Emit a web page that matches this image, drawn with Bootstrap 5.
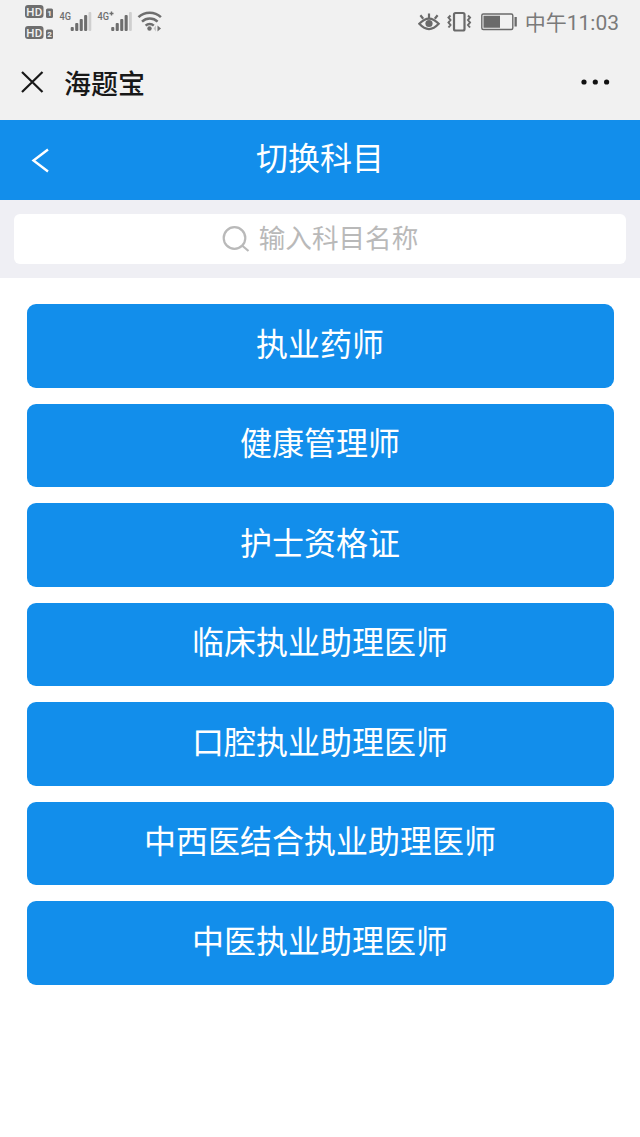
<!DOCTYPE html>
<html lang="zh-CN">
<head>
<meta charset="utf-8">
<meta name="viewport" content="width=device-width, initial-scale=1">
<title>切换科目</title>
<link href="https://cdn.jsdelivr.net/npm/bootstrap@5.3.0/dist/css/bootstrap.min.css" rel="stylesheet">
<style>
  body { font-family: "Noto Sans CJK SC", sans-serif; background: #fff; }
  svg { display: block; flex: none; }
  .status-bar { height: 44px; background: #f1f1f1; padding: 0 21px 0 24px; }
  .clock { font: 21px/44px Roboto, "Noto Sans CJK SC", sans-serif; color: #7a7a7a; margin-left: 7px; padding-top: 1px; white-space: nowrap; }
  .title-bar { height: 76px; background: #f1f1f1; padding: 0 30px 0 21px; }
  .app-name { font-size: 27px; line-height: 76px; font-weight: 500; color: #181818; margin-left: 20px; padding-top: 1px; }
  .page-head { height: 79.5px; background: #128eeb; color: #fff; }
  .page-head h1 { font-size: 32px; line-height: 72px; font-weight: 400; }
  .back-btn { left: 31px; top: 27px; }
  .search-area { height: 78px; background: #efeff4; padding: 14px; }
  .search-box { height: 50px; border-radius: 6px; color: #b9b9b9; font-size: 26.6px; line-height: 46px; }
  .subjects { padding: 26.8px 26.5px; gap: 16px; }
  .subjects .btn { --bs-btn-bg: #128eeb; --bs-btn-color: #fff; --bs-btn-hover-bg: #0f7fd3; --bs-btn-hover-color: #fff;
    height: 83.5px; border: 0; border-radius: 9px; font-size: 32px; line-height: 75px; padding: 0 0 8px; }
</style>
</head>
<body>
<header>
  <div class="status-bar d-flex align-items-center">
    <svg width="140" height="44" viewBox="24 0 140 44" fill="#6e6e6e" font-family="Roboto, sans-serif" font-weight="700">
      <rect x="25" y="5" width="18.500" height="13" rx="3"/>
      <rect x="25" y="26" width="18.500" height="13" rx="3"/>
      <g fill="#f1f1f1" font-size="11.500" font-weight="500">
        <text x="26.300" y="15.700" textLength="16">HD</text>
        <text x="26.300" y="36.700" textLength="16">HD</text>
      </g>
      <rect x="46" y="8.500" width="7" height="9.500" rx="1.500"/>
      <rect x="46" y="29.500" width="7" height="9.500" rx="1.500"/>
      <g fill="#f1f1f1" font-size="8">
        <text x="47.200" y="16.200">1</text>
        <text x="47.200" y="37.200">2</text>
      </g>
      <g font-size="11.500" font-weight="500">
        <text x="59.500" y="20" textLength="11.500" lengthAdjust="spacingAndGlyphs">4G</text>
        <text x="97.500" y="20" textLength="11.500" lengthAdjust="spacingAndGlyphs">4G</text>
      </g>
      <path d="M109.500 13.500h4M111.500 11.500v4" stroke="#6e6e6e" stroke-width="1.400"/>
      <g id="bars">
        <rect x="70.700" y="27" width="3.100" height="4" rx="1"/>
        <rect x="75.200" y="23" width="3.100" height="8" rx="1"/>
        <rect x="79.700" y="19" width="3.100" height="12" rx="1"/>
        <rect x="84.100" y="15" width="3.100" height="16" rx="1"/>
        <rect x="88.500" y="12" width="2.800" height="19" rx="1" fill="#cfcfcf"/>
      </g>
      <use href="#bars" x="40.500"/>
      <g fill="none" stroke="#6e6e6e" stroke-width="2.500">
        <path d="M138.500 17.200a16 16 0 0 1 22.400 0M142 21.600a11.500 11.500 0 0 1 15.600 0M145.600 25.600a6.300 6.300 0 0 1 8.200 0"/>
      </g>
      <circle cx="149.500" cy="28.500" r="2.200"/>
      <path d="M157.500 25.500l3.500 3-3.500 3z"/>
      <path d="M156 25.500l-2.500 3 2.500 3z" fill="#c6c6c6"/>
    </svg>
    <svg class="ms-auto" width="100" height="44" viewBox="418 0 100 44" fill="none" stroke="#6a6a6a" stroke-width="2.200">
      <path d="M419.300 23.800q9.700-10.500 19.400 0q-9.700 10.500-19.400 0z"/>
      <circle cx="429" cy="23.500" r="3.600" fill="#6a6a6a" stroke="none"/>
      <path d="M429 18v-4.500M423.200 18.800l-2.800-3.500M434.800 18.800l2.800-3.500"/>
      <rect x="454" y="13" width="10.500" height="17.500" rx="1.500"/>
      <path d="M450.500 15.500l-2 2 2 2.500-2 2.500 2 2.500-2 2.500M468 15.500l2 2-2 2.500 2 2.500-2 2.500 2 2.500" stroke-width="2"/>
      <rect x="481.800" y="14" width="31" height="15.500" rx="1.500" stroke-width="1.400"/>
      <path d="M483.500 15.700h16.500v12h-16.500zM514.500 17h2.300v9.500h-2.300z" fill="#6a6a6a" stroke="none"/>
    </svg>
    <span class="clock">中午11:03</span>
  </div>
  <nav class="title-bar d-flex align-items-center">
    <svg width="23" height="23" viewBox="0 0 23 23" stroke="#181818" stroke-width="2.200"><path d="M1 1l20.500 20M21.500 1l-20.500 20"/></svg>
    <span class="app-name">海题宝</span>
    <svg class="ms-auto" width="29" height="8" viewBox="0 0 29 8" fill="#111"><circle cx="3" cy="4" r="2.600"/><circle cx="14.300" cy="4" r="2.600"/><circle cx="25.600" cy="4" r="2.600"/></svg>
  </nav>
</header>
<div class="page-head position-relative text-center">
  <a href="#" class="back-btn position-absolute" aria-label="返回"><svg width="20" height="28" viewBox="0 0 20 28" fill="none" stroke="#fff" stroke-width="2.400"><path d="M17 2.500L2.500 13.500 17 24.500"/></svg></a>
  <h1 class="m-0">切换科目</h1>
</div>
<div class="search-area">
  <div class="search-box bg-white d-flex justify-content-center align-items-start">
    <svg class="align-self-center" width="29" height="28" viewBox="0 0 29 28" fill="none" stroke="#b9b9b9" stroke-width="2.200"><circle cx="12.500" cy="13" r="10.800"/><path d="M20 20.500l6.500 5.500"/></svg>
    <span class="ms-2">输入科目名称</span>
  </div>
</div>
<main class="subjects d-grid">
  <button class="btn" type="button">执业药师</button>
  <button class="btn" type="button">健康管理师</button>
  <button class="btn" type="button">护士资格证</button>
  <button class="btn" type="button">临床执业助理医师</button>
  <button class="btn" type="button">口腔执业助理医师</button>
  <button class="btn" type="button">中西医结合执业助理医师</button>
  <button class="btn" type="button">中医执业助理医师</button>
</main>
<script src="https://cdn.jsdelivr.net/npm/bootstrap@5.3.0/dist/js/bootstrap.bundle.min.js"></script>
</body>
</html>
